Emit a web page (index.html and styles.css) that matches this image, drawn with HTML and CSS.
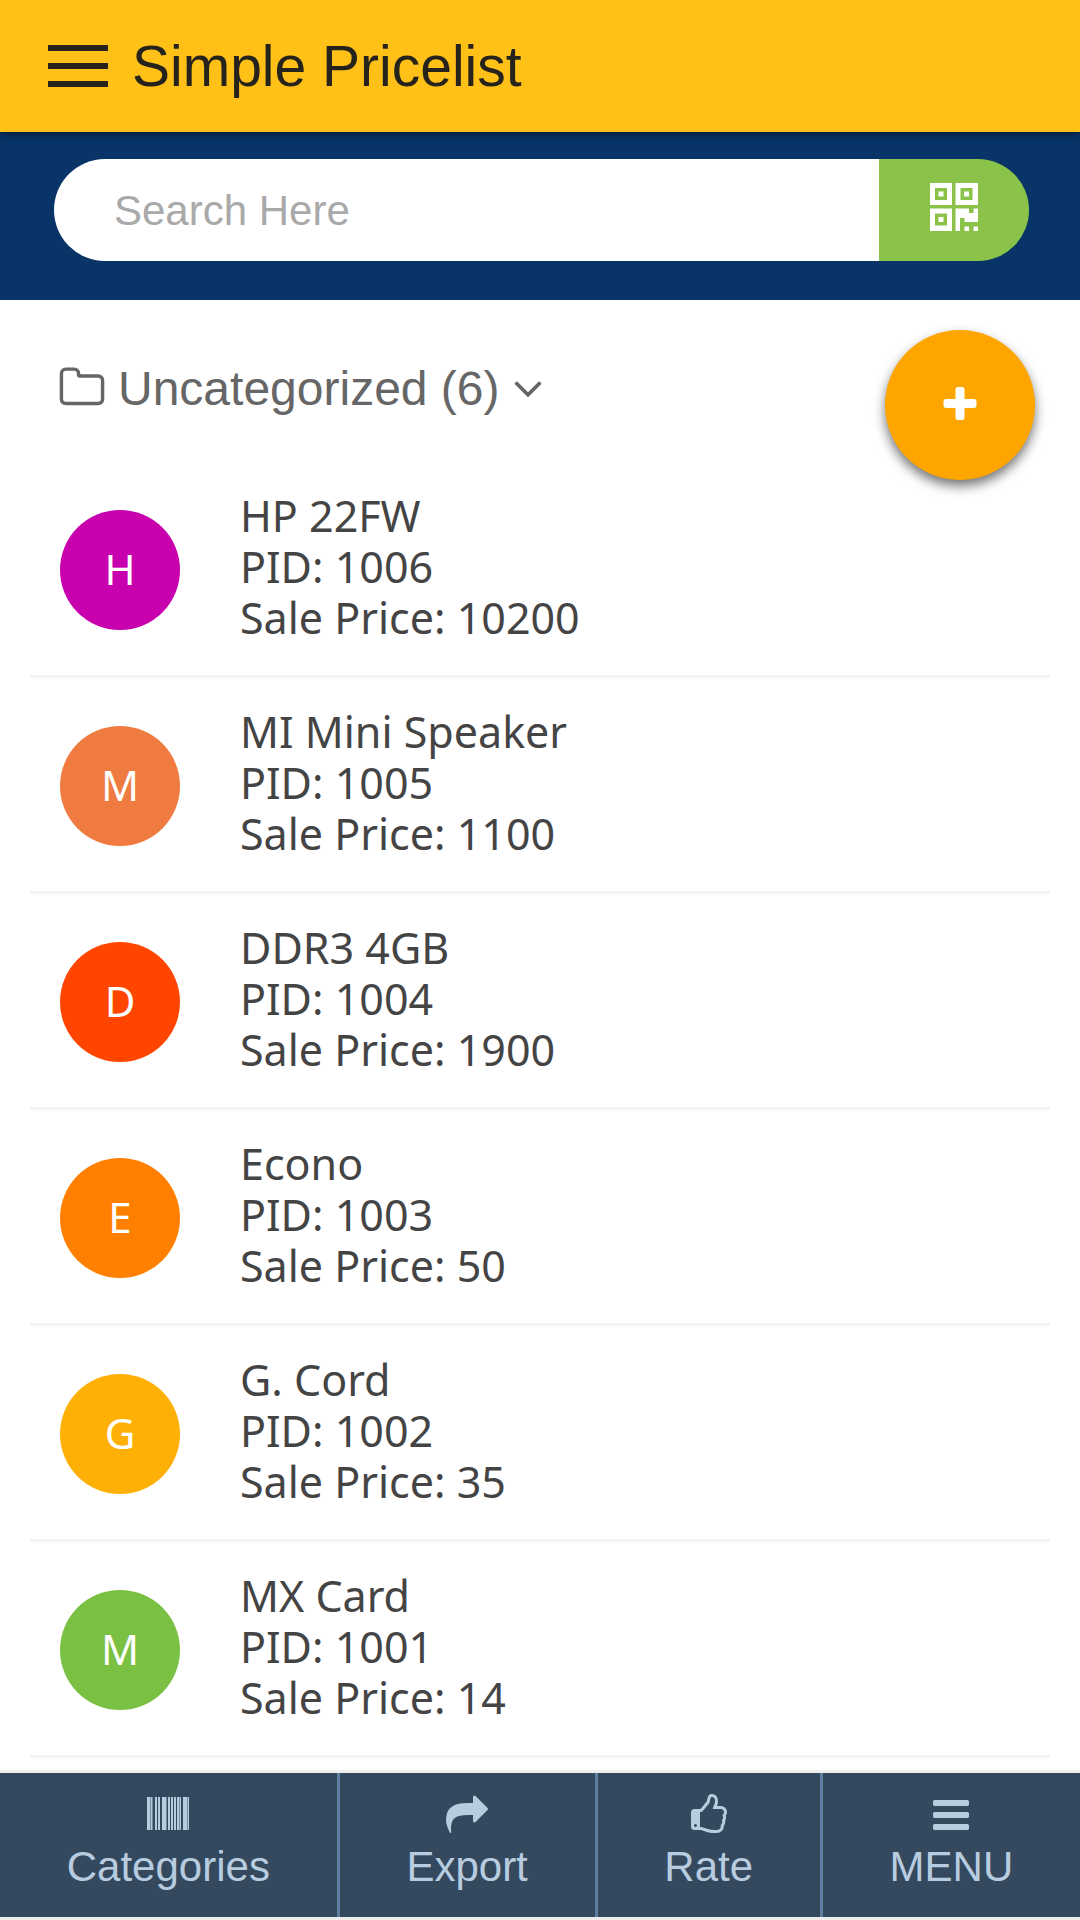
FILE: index.html
```html
<!DOCTYPE html>
<html lang="en">

<head>
    <meta charset="UTF-8">
    <meta name="viewport" content="width=device-width, initial-scale=1">
    <title>Simple Pricelist</title>
    <link rel="stylesheet" href="styles.css">
</head>

<body>

    <header class="topbar">
        <button class="menu-toggle" type="button" aria-label="Open menu">
            <span></span>
            <span></span>
            <span></span>
        </button>
        <h1>Simple Pricelist</h1>
    </header>

    <form class="search">
        <input type="search" class="search-input" placeholder="Search Here" aria-label="Search Here">
        <button class="search-scan" type="button" aria-label="Scan code">
            <svg viewBox="0 0 48 48" fill-rule="evenodd"><path d="M0 0h22v22h-22zM5 5v12h12v-12zM8.500 8.500h5v5h-5zM25.500 0h22.500v22h-22.500zM30.500 5v12h12v-12zM34 8.500h5v5h-5zM0 25.500h22v22.500h-22zM5 30.500v12h12v-12zM8.500 34h5v5h-5zM25.500 25.500h13.500v4.500h4.500v-4.500h4.500v13.500h-13.500v-4h-4.500v13h-4.500zM34.500 43.500h4.500v4.500h-4.500zM43.500 43.500h4.500v4.500h-4.500z"/></svg>
        </button>
    </form>

    <main>
        <button class="category" type="button">
            <svg viewBox="0 0 1792 1792"><path d="M1600 1312v-704q0-40-28-68t-68-28h-704q-40 0-68-28t-28-68v-64q0-40-28-68t-68-28h-320q-40 0-68 28t-28 68v960q0 40 28 68t68 28h1216q40 0 68-28t28-68zm128-704v704q0 92-66 158t-158 66h-1216q-92 0-158-66t-66-158v-960q0-92 66-158t158-66h320q92 0 158 66t66 158v32h672q92 0 158 66t66 158z"/></svg>
            <span>Uncategorized (6)</span>
            <svg viewBox="0 0 1792 1792"><path d="M1395 736q0 13-10 23l-466 466q-10 10-23 10t-23-10l-466-466q-10-10-10-23t10-23l50-50q10-10 23-10t23 10l393 393 393-393q10-10 23-10t23 10l50 50q10 10 10 23z"/></svg>
        </button>

        <button class="add" type="button" aria-label="Add product">
            <svg viewBox="0 0 1792 1792"><path d="M1600 736v192q0 40-28 68t-68 28h-416v416q0 40-28 68t-68 28h-192q-40 0-68-28t-28-68v-416h-416q-40 0-68-28t-28-68v-192q0-40 28-68t68-28h416v-416q0-40 28-68t68-28h192q40 0 68 28t28 68v416h416q40 0 68 28t28 68z"/></svg>
        </button>

        <!-- Products -->
        <ul class="products">
            <li>
                <span class="avatar magenta">H</span>
                <div class="details">
                    <p>HP 22FW</p>
                    <p>PID: 1006</p>
                    <p>Sale Price: 10200</p>
                </div>
            </li>
            <li>
                <span class="avatar coral">M</span>
                <div class="details">
                    <p>MI Mini Speaker</p>
                    <p>PID: 1005</p>
                    <p>Sale Price: 1100</p>
                </div>
            </li>
            <li>
                <span class="avatar red">D</span>
                <div class="details">
                    <p>DDR3 4GB</p>
                    <p>PID: 1004</p>
                    <p>Sale Price: 1900</p>
                </div>
            </li>
            <li>
                <span class="avatar orange">E</span>
                <div class="details">
                    <p>Econo</p>
                    <p>PID: 1003</p>
                    <p>Sale Price: 50</p>
                </div>
            </li>
            <li>
                <span class="avatar amber">G</span>
                <div class="details">
                    <p>G. Cord</p>
                    <p>PID: 1002</p>
                    <p>Sale Price: 35</p>
                </div>
            </li>
            <li>
                <span class="avatar green">M</span>
                <div class="details">
                    <p>MX Card</p>
                    <p>PID: 1001</p>
                    <p>Sale Price: 14</p>
                </div>
            </li>
        </ul>
    </main>

    <nav class="bottom-nav">
        <a href="#categories">
            <svg viewBox="0 0 42 42"><path d="M0 3h3v33h-3zM4 3h1v33h-1zM8 3h2v33h-2zM11 3h2v33h-2zM15 3h4v33h-4zM21 3h2v33h-2zM24 3h2v33h-2zM27 3h2v33h-2zM30 3h2v33h-2zM33 3h1v33h-1zM36 3h4v33h-4zM41 3h1v33h-1z"/><path class="faint" d="M3 3h1v33h-1zM5 3h1v33h-1zM19 3h1v33h-1zM32 3h1v33h-1zM40 3h1v33h-1z"/></svg>
            Categories
        </a>
        <a href="#export">
            <svg viewBox="0 0 1792 1792"><path d="M1792 640q0 26-19 45l-512 512q-19 19-45 19t-45-19-19-45v-256h-224q-98 0-175.500 6t-154 21.500-133 42.500-105.500 69.500-80 101-48.500 138.500-17.500 181q0 55 5 123 0 6 2.500 23.500t2.500 26.500q0 15-8.500 25t-23.500 10q-16 0-28-17-7-9-13-22t-13.500-30-10.500-24q-127-285-127-451 0-199 53-333 162-403 875-403h224v-256q0-26 19-45t45-19 45 19l512 512q19 19 19 45z"/></svg>
            Export
        </a>
        <a href="#rate">
            <svg viewBox="0 0 1792 1792"><path d="M384 1344q0-26-19-45t-45-19-45 19-19 45 19 45 45 19 45-19 19-45zm1152-576q0-51-39-89.500t-89-38.500h-352q0-58 48-159.500t48-160.500q0-98-32-145t-128-47q-26 26-38 85t-30.500 125.500-59.500 109.500q-22 23-77 91-4 5-23 30t-31.500 41-34.500 42.500-40 44-38.500 35.500-40 27-35.500 9h-32v640h32q13 0 31.500 3t33 6.500 38 11 35 11.500 35.500 12.500 29 10.500q211 73 342 73h121q192 0 192-167 0-26-5-56 30-16 47.500-52.500t17.500-73.500-18-69q53-50 53-119 0-25-10-55.500t-25-47.500q32-1 53.500-47t21.500-81zm128-1q0 89-49 163 9 33 9 69 0 77-38 144 3 21 3 43 0 101-60 178 1 139-85 219.500t-227 80.500h-129q-96 0-189.500-22.500t-216.500-65.500q-116-40-138-40h-288q-53 0-90.500-37.500t-37.500-90.500v-640q0-53 37.500-90.500t90.500-37.500h274q36-24 137-155 58-75 107-128 24-25 35.500-85.500t30.500-126.500 62-108q39-37 90-37 84 0 151 32.500t102 101.500 35 186q0 93-48 192h176q104 0 180 76t76 179z"/></svg>
            Rate
        </a>
        <a href="#menu">
            <svg viewBox="0 0 1792 1792"><path d="M1664 1344v128q0 26-19 45t-45 19h-1408q-26 0-45-19t-19-45v-128q0-26 19-45t45-19h1408q26 0 45 19t19 45zm0-512v128q0 26-19 45t-45 19h-1408q-26 0-45-19t-19-45v-128q0-26 19-45t45-19h1408q26 0 45 19t19 45zm0-512v128q0 26-19 45t-45 19h-1408q-26 0-45-19t-19-45v-128q0-26 19-45t45-19h1408q26 0 45 19t19 45z"/></svg>
            MENU
        </a>
    </nav>

</body>

</html>
```
FILE: styles.css
```css
* {
    box-sizing: border-box;
}

body {
    margin: 0;
    min-height: 100vh;
    display: flex;
    flex-direction: column;
    font-family: "Liberation Sans", Arial, sans-serif;
    background-color: #fff;
}

button {
    border: none;
    padding: 0;
    background: none;
    font-family: inherit;
    cursor: pointer;
}

svg {
    display: block;
    fill: currentColor;
}

.topbar {
    position: relative;
    display: flex;
    align-items: center;
    gap: 24px;
    height: 132px;
    padding: 0 48px;
    background-color: #ffc017;
    color: #26231c;
    box-shadow: 0 2px 8px rgba(0, 0, 0, 0.5);
}

.topbar h1 {
    margin: 0;
    font-size: 57px;
    font-weight: normal;
}

.menu-toggle {
    display: flex;
    flex-direction: column;
    gap: 12px;
    width: 60px;
}

.menu-toggle span {
    height: 6px;
    background-color: #26231c;
}

.search {
    display: flex;
    padding: 27px 51px 39px 54px;
    background-color: #083468;
}

.search-input {
    flex: 1;
    min-width: 0;
    height: 102px;
    padding: 2px 60px 0;
    border: none;
    border-radius: 51px 0 0 51px;
    font-family: inherit;
    font-size: 42px;
    color: #444;
    background-color: #fff;
    appearance: none;
}

.search-input::placeholder {
    color: #a9a9a9;
}

.search-scan {
    display: flex;
    align-items: center;
    justify-content: center;
    width: 150px;
    padding-bottom: 6px;
    border-radius: 0 51px 51px 0;
    background-color: #8bc34a;
    color: #fff;
}

.search-scan svg {
    width: 48px;
    height: 48px;
}

main {
    position: relative;
    flex: 1;
    padding: 60px 30px 12px;
}

.category {
    display: flex;
    align-items: center;
    margin: 0 28px 46px;
    font-size: 48px;
    line-height: 54px;
    color: #666;
}

.category svg {
    width: 48px;
    height: 48px;
}

.category span {
    margin: 0 4px 0 12px;
    padding-top: 2px;
}

/* floats over the list */
.add {
    position: absolute;
    top: 30px;
    right: 45px;
    display: flex;
    align-items: center;
    justify-content: center;
    width: 150px;
    height: 150px;
    border-radius: 50%;
    background-color: #ffa500;
    color: #fff;
    box-shadow: 0 6px 12px rgba(0, 0, 0, 0.55);
}

.add svg {
    width: 42px;
    height: 42px;
}

.products {
    margin: 0;
    padding: 0;
    list-style: none;
    font-family: "Noto Sans", sans-serif;
}

.products li {
    display: flex;
    align-items: flex-start;
    gap: 60px;
    padding: 28px 30px 32px;
    border-bottom: 3px solid #f4f4f4;
}

.avatar {
    display: flex;
    align-items: center;
    justify-content: center;
    width: 120px;
    height: 120px;
    margin-top: 20px;
    padding-bottom: 4px;
    border-radius: 50%;
    font-size: 42px;
    color: #fff;
}

.magenta {
    background-color: #c800ae;
}

.coral {
    background-color: #ef7b40;
}

.red {
    background-color: #ff4500;
}

.orange {
    background-color: #ff8000;
}

.amber {
    background-color: #ffb007;
}

.green {
    background-color: #7ac143;
}

.details p {
    margin: 0;
    font-size: 43px;
    line-height: 51px;
    color: #444;
}

.bottom-nav {
    display: flex;
    border-top: 3px solid #eee;
    border-bottom: 3px solid #eee;
    background-color: #34495e;
}

.bottom-nav a {
    flex: 1 1 auto;
    display: flex;
    flex-direction: column;
    align-items: center;
    gap: 7px;
    padding: 21px 0 26px;
    border-right: 3px solid #5d7fa3;
    font-size: 42px;
    line-height: 48px;
    color: #b8cce0;
    text-decoration: none;
}

.bottom-nav a:last-child {
    border-right: none;
}

.bottom-nav svg {
    width: 42px;
    height: 42px;
}

.faint {
    opacity: 0.5;
}
```
